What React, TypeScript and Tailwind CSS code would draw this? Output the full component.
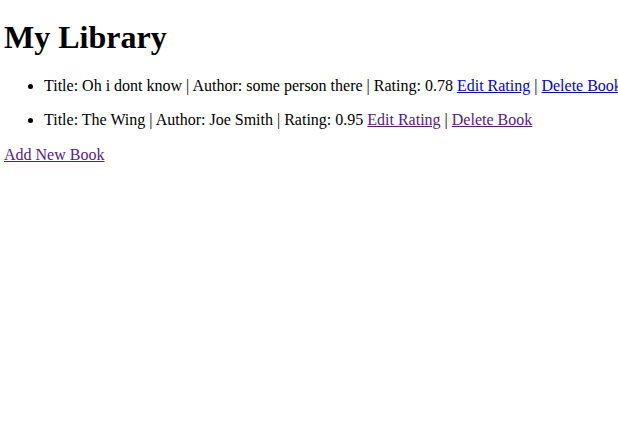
import React from 'react';

type Book = {
  title: string;
  author: string;
  rating: string;
  visited: boolean;
};

const books: Book[] = [
  { title: 'Oh i dont know', author: 'some person there', rating: '0.78', visited: false },
  { title: 'The Wing', author: 'Joe Smith', rating: '0.95', visited: true },
];

export default function App() {
  return (
    <div
      className="w-full h-[442px] overflow-hidden bg-white text-black px-1 pt-[18.5px] text-[16px] leading-[1.15]"
      style={{ fontFamily: '"Liberation Serif", "Times New Roman", serif' }}
    >
      <h1 className="text-[32px] font-bold leading-[1.15] mb-[21.5px]">My Library</h1>

      <ul className="list-disc pl-10 space-y-4">
        {books.map((book) => {
          const linkColor = book.visited ? 'text-[#551a8b]' : 'text-[#0000ee]';
          return (
            <li key={book.title} className="whitespace-nowrap">
              Title: {book.title} | Author: {book.author} | Rating: {book.rating}{' '}
              <a href="#" className={`underline ${linkColor}`}>
                Edit Rating
              </a>{' '}
              |{' '}
              <a href="#" className={`underline ${linkColor}`}>
                Delete Book
              </a>
            </li>
          );
        })}
      </ul>

      <div className="mt-4">
        <a href="#" className="underline text-[#551a8b]">
          Add New Book
        </a>
      </div>
    </div>
  );
}
